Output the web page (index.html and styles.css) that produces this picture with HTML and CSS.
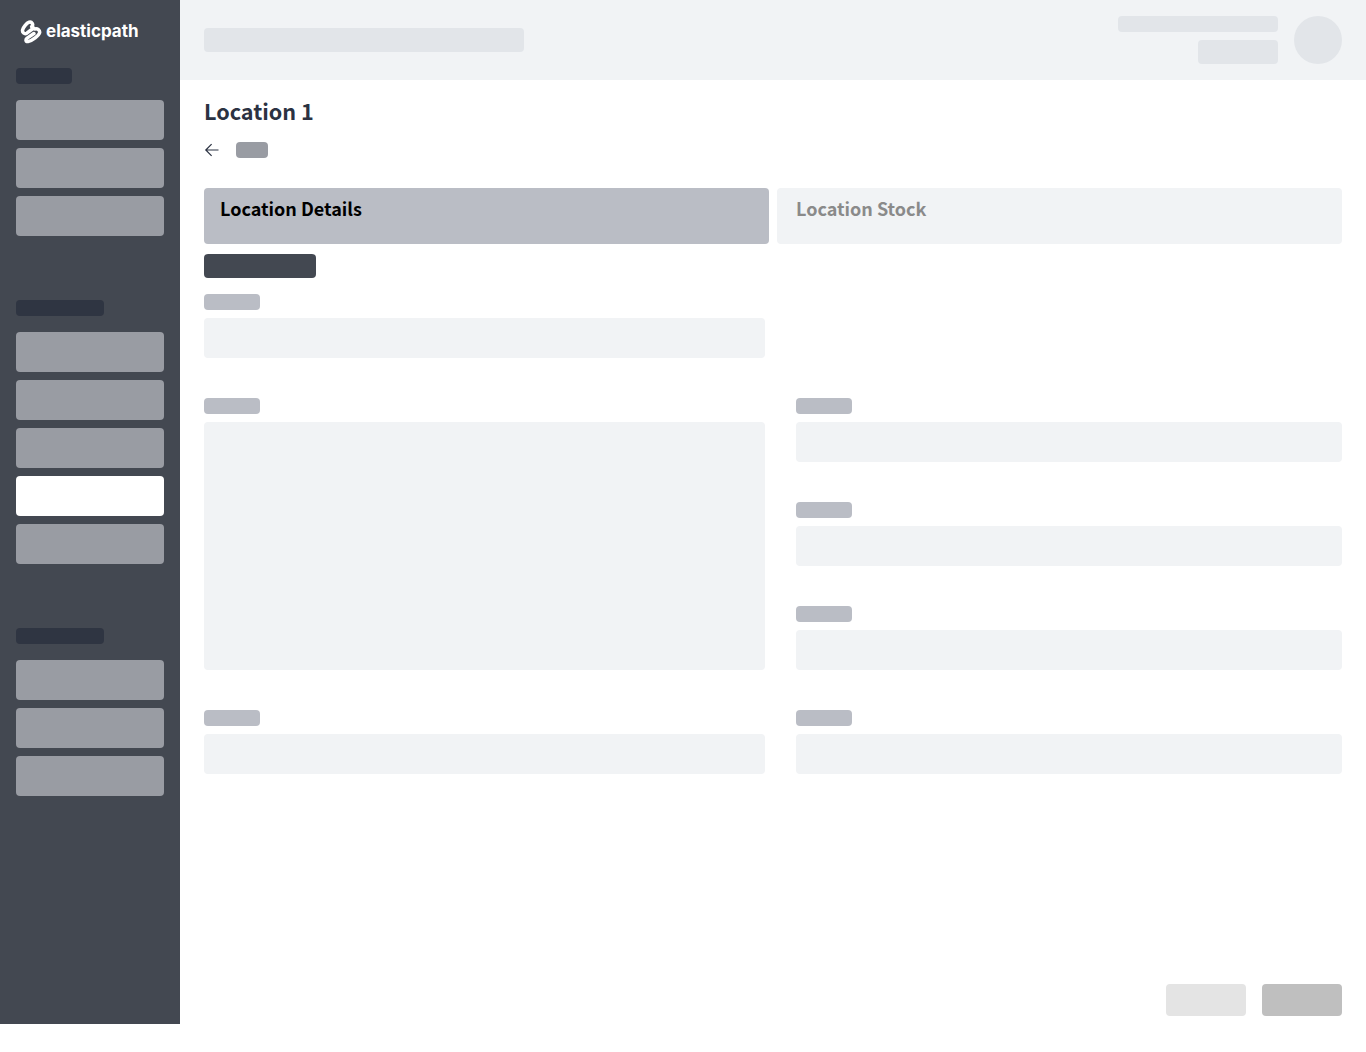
FILE: index.html
```html
<!DOCTYPE html>
<html lang="en">
<head>
<meta charset="utf-8">
<title>Location 1</title>
<link rel="stylesheet" href="styles.css">
</head>
<body>
<div class="app">
  <aside class="sidebar">
    <div class="logo">
      <svg class="logo-icon" viewBox="1 1 19.5 22" width="22" height="24" aria-hidden="true">
        <path class="logo-stroke" d="M12.6 8.8 L6.9 13.1 C4.8 14.4 2.4 12.4 3.1 9.9 C3.8 7.6 6.6 3.8 9 3 C11.6 2.4 13.4 5 11.4 7.2 L14.4 9.3 C16.6 8.6 19.2 10.4 18.6 12.8 C18 15.2 12 20 8 20.8 C5.8 21 5.6 18.8 7.2 17.6 L13.4 13.4"/>
      </svg>
      <span class="logo-text">elasticpath</span>
    </div>
    <div class="skel nav-label w56"></div>
    <div class="nav-group">
      <div class="skel nav-item"></div>
      <div class="skel nav-item"></div>
      <div class="skel nav-item"></div>
    </div>
    <div class="skel nav-label w88"></div>
    <div class="nav-group">
      <div class="skel nav-item"></div>
      <div class="skel nav-item"></div>
      <div class="skel nav-item"></div>
      <div class="skel nav-item active"></div>
      <div class="skel nav-item"></div>
    </div>
    <div class="skel nav-label w88"></div>
    <div class="nav-group">
      <div class="skel nav-item"></div>
      <div class="skel nav-item"></div>
      <div class="skel nav-item"></div>
    </div>
  </aside>
  <div class="main">
    <header class="topbar">
      <div class="skel search"></div>
      <div class="user">
        <div class="user-text">
          <div class="skel user-name"></div>
          <div class="skel user-role"></div>
        </div>
        <div class="avatar"></div>
      </div>
    </header>
    <main class="content">
      <h1 class="title">Location 1</h1>
      <div class="back-row">
        <svg class="back-icon" viewBox="0 0 16 16" width="16" height="16" aria-hidden="true">
          <path d="M14.5 8H1.8M7.6 2.2 1.8 8l5.8 5.8"/>
        </svg>
        <div class="skel back-label"></div>
      </div>
      <div class="tabs">
        <div class="tab tab-active">Location Details</div>
        <div class="tab">Location Stock</div>
      </div>
      <div class="skel section-title"></div>
      <div class="form">
        <div class="field field-first">
          <div class="skel field-label"></div>
          <div class="skel input"></div>
        </div>
        <div class="field field-tall">
          <div class="skel field-label"></div>
          <div class="skel input textarea"></div>
        </div>
        <div class="field right">
          <div class="skel field-label"></div>
          <div class="skel input"></div>
        </div>
        <div class="field right">
          <div class="skel field-label"></div>
          <div class="skel input"></div>
        </div>
        <div class="field right">
          <div class="skel field-label"></div>
          <div class="skel input"></div>
        </div>
        <div class="field">
          <div class="skel field-label"></div>
          <div class="skel input"></div>
        </div>
        <div class="field right">
          <div class="skel field-label"></div>
          <div class="skel input"></div>
        </div>
      </div>
      <div class="actions">
        <div class="skel btn btn-light"></div>
        <div class="skel btn btn-dark"></div>
      </div>
    </main>
  </div>
</div>
</body>
</html>
```
FILE: styles.css
```css
* { box-sizing: border-box; }
html, body { margin: 0; padding: 0; background: #fff; }
body { font-family: "Noto Sans CJK SC", "Noto Sans", sans-serif; }
.skel { border-radius: 4px; }

.app { display: flex; height: 1024px; }

.sidebar {
  width: 180px;
  flex: none;
  background: #434851;
  padding: 16px 16px 0;
  display: flex;
  flex-direction: column;
}
.logo { display: flex; align-items: center; height: 32px; padding-left: 4px; gap: 4px; margin-bottom: 20px; }
.logo-icon { flex: none; }
.logo-stroke { fill: none; stroke: #fff; stroke-width: 3.2; stroke-linecap: round; stroke-linejoin: round; }
.logo-text { font-family: "Inter", sans-serif; font-weight: 700; font-size: 17px; color: #fff; line-height: 30px; align-self: flex-start; }
.nav-label { height: 16px; background: #2f3542; flex: none; }
.w56 { width: 56px; }
.w88 { width: 88px; }
.nav-group { display: flex; flex-direction: column; gap: 8px; margin: 16px 0 64px; }
.nav-item { height: 40px; background: #999ca3; }
.nav-item.active { background: #fff; }

.main { flex: 1; min-width: 0; display: flex; flex-direction: column; }
.topbar {
  height: 80px;
  flex: none;
  background: #f1f3f5;
  padding: 0 24px;
  display: flex;
  align-items: center;
  justify-content: space-between;
}
.search { width: 320px; height: 24px; background: #e2e5e9; }
.user { display: flex; align-items: center; gap: 16px; }
.user-text { display: flex; flex-direction: column; align-items: flex-end; gap: 8px; }
.user-name { width: 160px; height: 16px; background: #e2e5e9; }
.user-role { width: 80px; height: 24px; background: #e2e5e9; }
.avatar { width: 48px; height: 48px; border-radius: 50%; background: #e2e5e9; }

.content { flex: 1; padding: 15px 24px 8px; display: flex; flex-direction: column; }
.title { margin: 0; font-size: 21.6px; line-height: 32px; font-weight: 700; color: #2b3242; }
.back-row { display: flex; align-items: center; gap: 16px; margin-top: 15px; height: 16px; }
.back-icon { flex: none; fill: none; stroke: #2b3242; stroke-width: 1.2; }
.back-label { width: 32px; height: 16px; background: #999ca3; }

.tabs { display: grid; grid-template-columns: 1fr 1fr; gap: 8px; margin-top: 30px; }
.tab {
  height: 56px;
  padding: 6px 16px 0 19px;
  background: #f1f3f5;
  border-radius: 4px;
  font-size: 18px;
  line-height: 28px;
  font-weight: 700;
  color: #8a8a8a;
}
.tab-active { background: #babdc5; color: #000; padding-left: 16px; }

.section-title { width: 112px; height: 24px; background: #434851; margin-top: 10px; }

.form {
  display: grid;
  grid-template-columns: 561px 546px;
  column-gap: 31px;
  row-gap: 40px;
  margin-top: 16px;
  grid-template-rows: 64px 64px 64px 64px 64px;
}
.field { display: flex; flex-direction: column; gap: 8px; }
.field-first { grid-column: 1 / -1; width: 561px; }
.field-tall { grid-row: 2 / span 3; }
.right { grid-column: 2; }
.field-label { width: 56px; height: 16px; background: #babdc5; flex: none; }
.input { height: 40px; background: #f1f3f5; flex: none; }
.textarea { height: auto; flex: 1; }

.actions { margin-top: auto; display: flex; justify-content: flex-end; gap: 15.6px; }
.btn { width: 80.4px; height: 32px; }
.btn-light { background: #e4e4e4; }
.btn-dark { background: #bfbfbf; }
```
